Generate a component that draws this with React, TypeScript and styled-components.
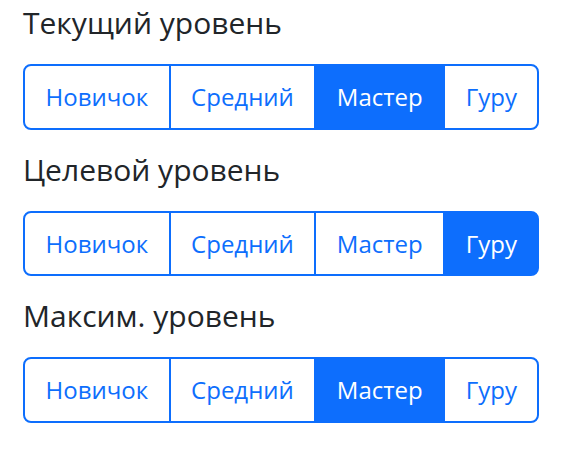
import React from 'react';
import styled, { createGlobalStyle } from 'styled-components';

const levels = ['Новичок', 'Средний', 'Мастер', 'Гуру'];

const sections = [
  { title: 'Текущий уровень', active: 2 },
  { title: 'Целевой уровень', active: 3 },
  { title: 'Максим. уровень', active: 2 },
];

const GlobalStyle = createGlobalStyle`
  body {
    margin: 0;
    background: #ffffff;
    font-family: "Open Sans", "Noto Sans", sans-serif;
    color: #212529;
  }
`;

const Page = styled.div`
  display: flex;
  flex-direction: column;
  align-items: flex-start;
  gap: 22px;
  padding: 5px 23px;
`;

const Section = styled.section`
  display: flex;
  flex-direction: column;
  align-items: flex-start;
  gap: 23px;
`;

const Title = styled.h4`
  margin: 0;
  font-size: 30px;
  font-weight: 400;
  line-height: 36px;
  color: #212529;
`;

const Group = styled.div`
  display: inline-flex;
`;

const Button = styled.button<{ $active: boolean }>`
  font-family: inherit;
  font-size: 24px;
  line-height: 37.5px;
  padding: 12px 20.5px;
  border: 2px solid #0d6efd;
  background: ${(p) => (p.$active ? '#0d6efd' : '#ffffff')};
  color: ${(p) => (p.$active ? '#ffffff' : '#0d6efd')};
  border-radius: 0;
  cursor: pointer;

  & + & {
    margin-left: -2px;
  }
  &:first-child {
    border-radius: 8px 0 0 8px;
  }
  &:last-child {
    border-radius: 0 8px 8px 0;
  }
`;

export default function App() {
  return (
    <>
      <GlobalStyle />
      <Page>
        {sections.map((s) => (
          <Section key={s.title}>
            <Title>{s.title}</Title>
            <Group>
              {levels.map((l, i) => (
                <Button key={l} $active={i === s.active}>
                  {l}
                </Button>
              ))}
            </Group>
          </Section>
        ))}
      </Page>
    </>
  );
}
